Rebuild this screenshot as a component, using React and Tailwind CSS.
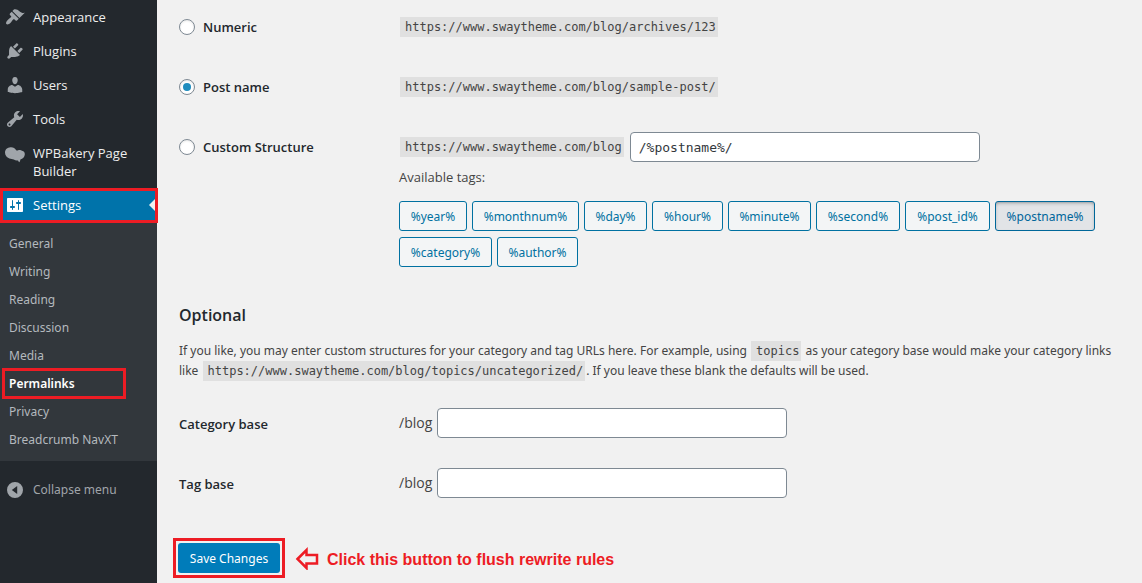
const ICONS = {
  appearance:
    "M14.48 11.06L7.41 3.99l1.5-1.5c.5-.56 2.3-.47 3.51.32 1.21.8 1.43 1.28 2.91 2.1 1.18.64 2.45 1.26 4.45.85zm-.71.71L6.7 4.7 4.93 6.47c-.39.39-.39 1.02 0 1.41l1.06 1.06c.39.39.39 1.03 0 1.42-.6.6-1.43 1.11-2.21 1.69-.35.26-.7.53-1.01.84C1.43 14.23.4 16.08 1.4 17.07c.99 1 2.84-.03 4.18-1.36.31-.31.58-.66.85-1.02.57-.78 1.08-1.61 1.69-2.21.39-.39 1.02-.39 1.41 0l1.06 1.06c.39.39 1.02.39 1.41 0z",
  plugins:
    "M13.11 4.36L9.87 7.6 8 5.73l3.24-3.24c.35-.34 1.05-.2 1.56.32.52.51.66 1.21.31 1.55zm-8 1.77l.91-1.12 9.01 9.01-1.19.84c-.71.71-2.63 1.16-3.82 1.16H6.14L4.9 17.26c-.59.59-1.54.59-2.12 0-.59-.58-.59-1.53 0-2.12l1.24-1.24v-3.88c0-1.13.4-3.19 1.09-3.89zm7.26 3.97l3.24-3.24c.34-.35 1.04-.21 1.55.31.52.51.66 1.21.31 1.55l-3.24 3.25z",
  users:
    "M10 9.25c-2.27 0-2.73-3.44-2.73-3.44C7 4.02 7.82 2 9.97 2c2.16 0 2.98 2.02 2.71 3.81 0 0-.41 3.44-2.68 3.44zm0 2.57L12.72 10c2.39 0 4.52 2.33 4.52 4.53v2.49s-3.65 1.13-7.24 1.13c-3.65 0-7.24-1.13-7.24-1.13v-2.49c0-2.25 1.94-4.48 4.47-4.48z",
  tools:
    "M16.68 9.77c-1.34 1.34-3.3 1.67-4.95.99l-5.41 6.52c-.99.99-2.59.99-3.58 0s-.99-2.59 0-3.57l6.52-5.42c-.68-1.65-.35-3.61.99-4.95 1.28-1.28 3.12-1.62 4.72-1.06l-2.89 2.89 2.82 2.82 2.86-2.87c.53 1.58.18 3.39-1.08 4.65zM3.81 16.21c.4.39 1.04.39 1.43 0 .4-.4.4-1.04 0-1.43-.39-.4-1.03-.4-1.43 0-.39.39-.39 1.03 0 1.43z",
  bakery:
    "M5.500 4.200C8 4 10 5 11.200 7.200C11.800 7.800 12.400 7.600 13.200 7.200C15 6.600 16.200 7.400 17 7.800C19 8 20 9.600 19.800 11.600C19.600 14.200 17.800 15.800 15.400 16.400C15.200 17.600 15 18.400 14.200 19.200C13.600 18.600 13.400 18 13 17.400C11.400 17.600 10 17.400 8.800 16.600C7.400 16.200 6 16.200 4.400 15.600C1.800 14.600 0 12.400 0 9.600C0 6.400 2.400 4.300 5.500 4.200z",
  settings:
    "M18 16V4c0-.55-.45-1-1-1H3c-.55 0-1 .45-1 1v12c0 .55.45 1 1 1h14c.55 0 1-.45 1-1zM8 11h1c.55 0 1 .45 1 1s-.45 1-1 1H8v1.5c0 .28-.22.5-.5.5s-.5-.22-.5-.5V13H6c-.55 0-1-.45-1-1s.45-1 1-1h1V5.5c0-.28.22-.5.5-.5s.5.22.5.5V11zm5-2h-1c-.55 0-1-.45-1-1s.45-1 1-1h1V5.5c0-.28.22-.5.5-.5s.5.22.5.5V7h1c.55 0 1 .45 1 1s-.45 1-1 1h-1v5.500c0 .28-.22.5-.5.5s-.5-.22-.5-.5V9z",
  collapse:
    "M10 2a8 8 0 1 0 0 16a8 8 0 1 0 0-16zM12.200 6v8L6.800 10z",
};

const MENU = [
  { label: "Appearance", icon: "appearance" },
  { label: "Plugins", icon: "plugins" },
  { label: "Users", icon: "users" },
  { label: "Tools", icon: "tools" },
  { label: "WPBakery Page Builder", icon: "bakery" },
];

const SUBMENU = [
  "General",
  "Writing",
  "Reading",
  "Discussion",
  "Media",
  "Permalinks",
  "Privacy",
  "Breadcrumb NavXT",
];

const TAGS = [
  { name: "%year%", width: "w-[68px]" },
  { name: "%monthnum%", width: "w-[107px]" },
  { name: "%day%", width: "w-[63px]" },
  { name: "%hour%", width: "w-[71px]" },
  { name: "%minute%", width: "w-[83px]" },
  { name: "%second%", width: "w-[84px]" },
  { name: "%post_id%", width: "w-[85px]" },
  { name: "%postname%", width: "w-[100px]", active: true },
  { name: "%category%", width: "w-[93px]" },
  { name: "%author%", width: "w-[81px]" },
];

function Icon({ name }) {
  return (
    <svg viewBox="0 0 20 20" className="size-5 shrink-0" fill="currentColor" fillRule="evenodd" aria-hidden="true">
      <path d={ICONS[name]} />
    </svg>
  );
}

function Code({ children }) {
  return (
    <code className="mx-px bg-[#e0e0e0] py-[3px] pr-[2px] pl-[5px] font-['DejaVu_Sans_Mono',monospace] text-[12px] leading-[14px] text-[#444]">
      {children}
    </code>
  );
}

function Sidebar() {
  return (
    <nav className="w-[157px] shrink-0 bg-[#23282d] text-[13px] leading-[18px] text-[#eee]">
      {MENU.map((item) => (
        <a key={item.label} href="#" className="flex gap-2 py-2 pr-2 pl-[5px]">
          <span className="flex h-[18px] items-center text-[#a0a5aa]">
            <Icon name={item.icon} />
          </span>
          {item.label}
        </a>
      ))}

      <a href="#" className="relative flex items-center gap-2 bg-[#0073aa] py-2 pl-[5px] text-white">
        <span className="flex h-[18px] items-center">
          <Icon name="settings" />
        </span>
        Settings
        <span className="absolute top-[9px] right-0 border-y-8 border-r-8 border-y-transparent border-r-[#f1f1f1]" />
        <span className="absolute top-0 -right-px left-0 h-[35px] border-[3px] border-[#ed1c24]" />
      </a>

      <ul className="bg-[#32373c] pt-2 pb-[7px] font-['Noto_Sans',sans-serif] text-[12px] text-[#b4b9be]">
        {SUBMENU.map((label) => (
          <li key={label} className="relative">
            <a
              href="#"
              className={label === "Permalinks" ? "block py-[5px] pl-[9px] font-semibold text-white" : "block py-[5px] pl-[9px]"}
            >
              {label}
            </a>
            {label === "Permalinks" && (
              <span className="absolute -top-[2px] left-[2px] h-[31px] w-[124px] border-[3px] border-[#ed1c24]" />
            )}
          </li>
        ))}
      </ul>

      <button
        type="button"
        className="mt-3 flex items-center gap-2 py-2 pl-[5px] font-['Noto_Sans',sans-serif] text-[12px] text-[#a0a5aa]"
      >
        <span className="flex h-[18px] items-center">
          <Icon name="collapse" />
        </span>
        Collapse menu
      </button>
    </nav>
  );
}

function RadioLabel({ children, checked }) {
  return (
    <label className="flex h-5 items-center gap-2 font-semibold text-[#23282d]">
      <input
        type="radio"
        name="structure"
        defaultChecked={checked}
        className="flex size-4 appearance-none items-center justify-center rounded-full border border-[#7e8993] bg-white shadow-[inset_0_1px_2px_rgba(0,0,0,0.1)] checked:before:size-2 checked:before:rounded-full checked:before:bg-[#1e8cbe]"
      />
      {children}
    </label>
  );
}

function BaseField({ id, label }) {
  return (
    <div className="grid grid-cols-[220px_1fr] items-center">
      <label htmlFor={id} className="pt-[2px] font-semibold text-[#23282d]">
        {label}
      </label>
      <div className="flex items-center gap-1">
        <span className="w-[34px] text-[14px]">/blog</span>
        <input id={id} type="text" className="h-[30px] w-[350px] rounded-sm border border-[#7e8993] bg-white px-2" />
      </div>
    </div>
  );
}

export default function App() {
  return (
    <div className="flex min-h-screen bg-[#f1f1f1] font-['Open_Sans','Noto_Sans',sans-serif] text-[13px] leading-5 text-[#444]">
      <Sidebar />

      <form className="min-w-0 flex-1 pt-[17px] pl-[22px]" onSubmit={(e) => e.preventDefault()}>
        <div className="grid grid-cols-[220px_1fr]">
          <RadioLabel>Numeric</RadioLabel>
          <div className="flex">
            <Code>https://www.swaytheme.com/blog/archives/123</Code>
          </div>
        </div>

        <div className="mt-10 grid grid-cols-[220px_1fr]">
          <RadioLabel checked>Post name</RadioLabel>
          <div className="flex">
            <Code>https://www.swaytheme.com/blog/sample-post/</Code>
          </div>
        </div>

        <div className="mt-[35px] grid grid-cols-[220px_1fr]">
          <div className="pt-[5px]">
            <RadioLabel>Custom Structure</RadioLabel>
          </div>
          <div>
            <div className="flex items-center gap-[5px]">
              <Code>https://www.swaytheme.com/blog</Code>
              <input
                type="text"
                aria-label="Custom structure"
                defaultValue="/%postname%/"
                className="h-[30px] w-[350px] rounded-sm border border-[#7e8993] bg-white px-2 font-['DejaVu_Sans_Mono',monospace] text-[13px] text-[#32373c]"
              />
            </div>
            <p className="mt-[5px]">Available tags:</p>
            <div className="mt-[14px] flex max-w-[720px] flex-wrap gap-x-[5px] gap-y-[6px]">
              {TAGS.map((tag) => (
                <button
                  key={tag.name}
                  type="button"
                  className={`h-[30px] rounded-[3px] border pt-[2px] font-['Noto_Sans',sans-serif] text-[12px] ${tag.width} ${
                    tag.active
                      ? "border-[#006799] bg-[#e2e4e7] text-[#00669b] shadow-[inset_0_2px_5px_-3px_#32373c]"
                      : "border-[#0071a1] bg-[#f3f5f6] text-[#0071a1]"
                  }`}
                >
                  {tag.name}
                </button>
              ))}
            </div>
          </div>
        </div>

        <h2 className="mt-[38px] text-[16px] font-semibold text-[#23282d]">Optional</h2>
        <p className="mt-4 pr-3 font-['Noto_Sans',sans-serif] text-[12px]">
          If you like, you may enter custom structures for your category and tag URLs here. For example, using{" "}
          <Code>topics</Code> as your category base would make your category links like{" "}
          <Code>https://www.swaytheme.com/blog/topics/uncategorized/</Code>. If you leave these blank the defaults will
          be used.
        </p>

        <div className="mt-[27px] flex flex-col gap-[30px]">
          <BaseField id="category-base" label="Category base" />
          <BaseField id="tag-base" label="Tag base" />
        </div>

        <div className="mt-10 -ml-[6px] flex items-center">
          <div className="border-[3px] border-[#ed1c24] px-[2px] py-[2px]">
            <button
              type="submit"
              className="block h-[30px] w-[102px] rounded-[3px] bg-[#007cba] pt-[2px] font-['Noto_Sans',sans-serif] text-[12px] text-white"
            >
              Save Changes
            </button>
          </div>
          <svg viewBox="0 0 24 24" className="ml-[10px] size-6" fill="none" stroke="#ed1c24" strokeWidth="2.500" aria-hidden="true">
            <path d="M2.500 13L11.500 4V9H22V17.500H11.500V22Z" />
          </svg>
          <span className="ml-2 pt-1 font-['Liberation_Sans',sans-serif] text-[16px] font-bold text-[#ed1c24]">
            Click this button to flush rewrite rules
          </span>
        </div>
      </form>
    </div>
  );
}
